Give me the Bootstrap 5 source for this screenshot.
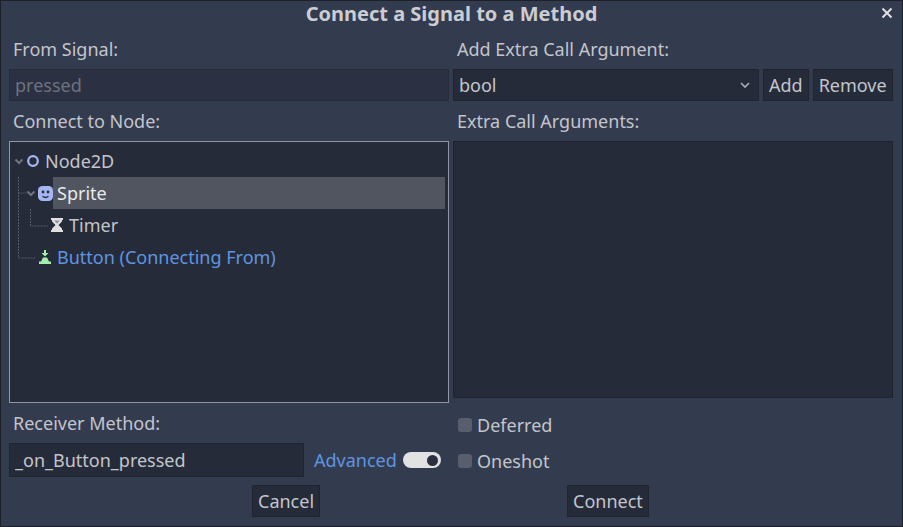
<!DOCTYPE html>
<html lang="en">
<head>
    <meta charset="UTF-8">
    <title>Connect a Signal to a Method</title>
    <link rel="stylesheet" href="https://cdn.jsdelivr.net/npm/bootstrap@5.3.2/dist/css/bootstrap.min.css">
    <style>
        html, body { height: 100%; }
        body {
            margin: 0;
            overflow: hidden;
            background: #1d2028;
            color: #c3c5cb;
            font-family: "Noto Sans", sans-serif;
            font-size: 18px;
            line-height: 24px;
        }
        .dlg {
            width: 901px;
            height: 525px;
            margin-left: 1px;
            margin-top: 1px;
            background: #333b4f;
            padding: 0 8px;
            position: relative;
        }
        .dlg-title {
            height: 26px;
            font-weight: 700;
            font-size: 20px;
            color: #cbcdd2;
            text-align: center;
            line-height: 25px;
        }
        .dlg-close {
            position: absolute;
            right: 9px;
            top: 6px;
            width: 12px;
            height: 12px;
            display: block;
        }
        .pane { width: 440px; }
        .cap { height: 42px; padding: 10px 0 0 4px; }
        .cap-low { height: 40px; padding-top: 8px; }
        .cap-recv { height: 40px; padding-top: 8px; }
        .fld.form-control, .fld.form-select {
            height: 32px;
            padding: 0 5px;
            background-color: #262b3a;
            border: 1px solid #20242f;
            border-radius: 0;
            color: #c3c5cb;
            font-size: 18px;
            line-height: 30px;
            box-shadow: none;
        }
        .fld.form-control:disabled { color: #6d7280; opacity: 1; background-color: #2b3142; border: 1px solid #272c3b; }
        .fld.form-select {
            width: 306px;
            background-size: 12px 8px;
            background-position: right 7px center;
            background-image: url("data:image/svg+xml,%3csvg xmlns='http://www.w3.org/2000/svg' viewBox='0 0 12 8'%3e%3cpath fill='none' stroke='%23a8abb4' stroke-width='1.7' d='M2 2l4 4 4-4'/%3e%3c/svg%3e");
        }
        .act.btn {
            height: 32px;
            padding: 0 5px;
            background: #262b3a;
            border: 1px solid #20242f;
            border-radius: 0;
            color: #c3c5cb;
            font-size: 18px;
            line-height: 30px;
        }
        .tree {
            width: 440px;
            height: 262px;
            position: relative;
            background: #262b3a;
            border: 1px solid #9296a2;
            padding-top: 3px;
        }
        .args {
            width: 440px;
            height: 257px;
            background: #262b3a;
            border: 1px solid #20242f;
        }
        .guides { position: absolute; left: -1px; top: -1px; }
        .leaf { height: 32px; }
        .leaf svg { flex: none; }
        .lv0 { padding-left: 3px; }
        .lv1 { padding-left: 15px; }
        .lv2 { padding-left: 41px; }
        .lv3 { padding-left: 29px; }
        .ico-gap { margin-left: 2px; }
        .ico-gap-s { margin-left: 1px; }
        .txt-gap { margin-left: 6px; }
        .hit { flex: 1; height: 32px; margin-right: 3px; padding-left: 4px; background: #51555f; color: #e8eaed; line-height: 32px; }
        .link-ish { color: #5f95e0; }
        .fld-method.form-control { width: 295px; height: 34px; }
        .adv { margin-left: 10px; width: 89px; }
        .pill {
            width: 38px;
            height: 16px;
            border-radius: 8px;
            background: #e2e2e2;
            padding-right: 3px;
        }
        .knob { width: 11px; height: 11px; border-radius: 50%; background: #2b3040; }
        .tick.form-check-input {
            width: 14px;
            height: 14px;
            margin: 0 5px 0 0;
            background-color: #595e6e;
            border: 0;
            border-radius: 3px;
        }
        .tick-top { height: 9px; }
        .tick-row { height: 36px; padding-left: 5px; }
        .foot { height: 32px; margin-top: 6px; }
        .foot-l { margin-left: 243px; }
        .foot-r { margin-left: 247px; }
    </style>
</head>
<body>
    <div class="dlg">
        <div class="dlg-title">Connect a Signal to a Method</div>
        <svg class="dlg-close" viewBox="0 0 12 12"><path d="M1.500 1.500l9 9M10.500 1.500l-9 9" stroke="#dfe0e4" stroke-width="2" fill="none"/></svg>

        <div class="d-flex gap-1">
            <div class="pane">
                <div class="cap">From Signal:</div>
                <input class="form-control fld" type="text" value="pressed" disabled>
                <div class="cap cap-low">Connect to Node:</div>
                <div class="tree">
                    <svg class="guides" width="60" height="135" fill="none" stroke="#565b6b" stroke-dasharray="2 1">
                        <path d="M9.500 36v81H26M9.500 52H18M21.500 68v17H39"/>
                    </svg>
                    <div class="leaf lv0 d-flex align-items-center">
                        <svg width="12" height="12" viewBox="0 0 12 12"><path d="M2.500 4.500L6 8l3.500-3.500" fill="none" stroke="#70747f" stroke-width="2"/></svg>
                        <svg class="ico-gap" width="12" height="12" viewBox="0 0 12 12"><circle cx="6" cy="6" r="4.800" fill="none" stroke="#a5b7f3" stroke-width="2.200"/></svg>
                        <span class="txt-gap text-nowrap">Node2D</span>
                    </div>
                    <div class="leaf lv1 d-flex align-items-center">
                        <svg width="12" height="12" viewBox="0 0 12 12"><path d="M2.500 4.500L6 8l3.500-3.500" fill="none" stroke="#70747f" stroke-width="2"/></svg>
                        <svg class="ico-gap-s" width="15" height="15" viewBox="0 0 15 15"><rect width="15" height="15" rx="4.500" fill="#a5b7f3"/><circle cx="5" cy="6" r="1.400" fill="#262b3a"/><circle cx="10" cy="6" r="1.400" fill="#262b3a"/><path d="M4.500 10.300q3 2.400 6 0" fill="none" stroke="#262b3a" stroke-width="1.300"/></svg>
                        <div class="hit text-nowrap">Sprite</div>
                    </div>
                    <div class="leaf lv2 d-flex align-items-center">
                        <svg width="12" height="14" viewBox="0 0 12 14"><path fill="#e0e0e0" d="M0 0h12v2h-1v1.500L7.500 7 11 10.500V12h1v2H0v-2h1v-1.500L4.500 7 1 3.500V2H0z"/><path fill="#8f919a" d="M3 2.500h6L6 5.500z"/></svg>
                        <span class="txt-gap text-nowrap">Timer</span>
                    </div>
                    <div class="leaf lv3 d-flex align-items-center">
                        <svg width="12" height="14" viewBox="0 0 12 14"><path fill="#a5efac" d="M5 0h2v3h2.500L6 6.500 2.500 3H5zM4 7.500h4l2 4h2V14H0v-2.500h2z"/></svg>
                        <span class="link-ish txt-gap text-nowrap">Button (Connecting From)</span>
                    </div>
                </div>
                <div class="cap cap-recv">Receiver Method:</div>
                <div class="d-flex align-items-center">
                    <input class="form-control fld fld-method" type="text" value="_on_Button_pressed">
                    <span class="link-ish adv text-nowrap">Advanced</span>
                    <div class="pill d-flex align-items-center justify-content-end" role="switch" aria-checked="true"><div class="knob"></div></div>
                </div>
            </div>
            <div class="pane">
                <div class="cap">Add Extra Call Argument:</div>
                <div class="d-flex gap-1">
                    <select class="form-select fld"><option>bool</option></select>
                    <button class="btn act" type="button">Add</button>
                    <button class="btn act" type="button">Remove</button>
                </div>
                <div class="cap cap-low">Extra Call Arguments:</div>
                <div class="args"></div>
                <div class="tick-top"></div>
                <div class="tick-row d-flex align-items-center">
                    <input class="form-check-input tick" type="checkbox" id="chkDeferred">
                    <label class="form-check-label" for="chkDeferred">Deferred</label>
                </div>
                <div class="tick-row d-flex align-items-center">
                    <input class="form-check-input tick" type="checkbox" id="chkOneshot">
                    <label class="form-check-label" for="chkOneshot">Oneshot</label>
                </div>
            </div>
        </div>
        <div class="foot d-flex">
            <button class="btn act foot-l" type="button">Cancel</button>
            <button class="btn act foot-r" type="button">Connect</button>
        </div>
    </div>
    <script src="https://cdn.jsdelivr.net/npm/bootstrap@5.3.2/dist/js/bootstrap.bundle.min.js"></script>
</body>
</html>
